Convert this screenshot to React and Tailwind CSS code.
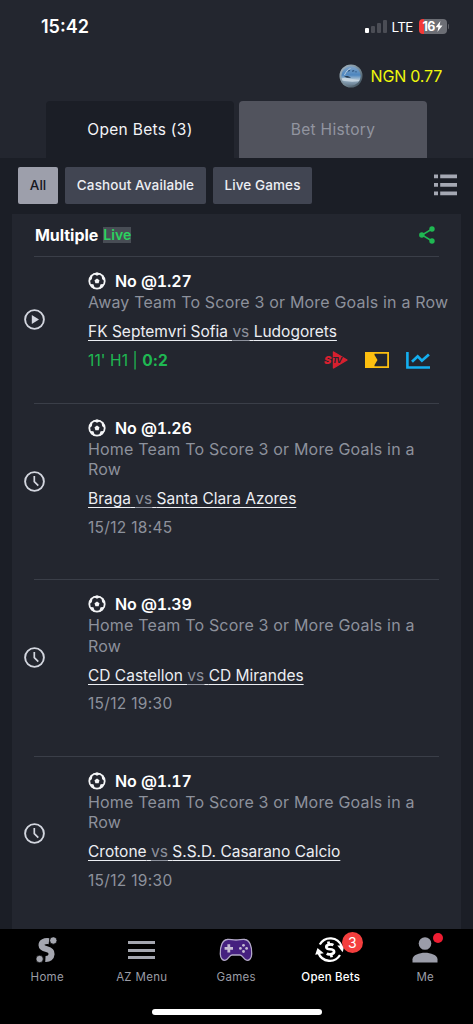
import React from 'react';

const bets = [
  {
    odds: 'No @1.27',
    market: 'Away Team To Score 3 or More Goals in a Row',
    home: 'FK Septemvri Sofia',
    away: 'Ludogorets',
    live: { clock: "11' H1", score: '0:2' },
  },
  {
    odds: 'No @1.26',
    market: 'Home Team To Score 3 or More Goals in a Row',
    home: 'Braga',
    away: 'Santa Clara Azores',
    date: '15/12 18:45',
  },
  {
    odds: 'No @1.39',
    market: 'Home Team To Score 3 or More Goals in a Row',
    home: 'CD Castellon',
    away: 'CD Mirandes',
    date: '15/12 19:30',
  },
  {
    odds: 'No @1.17',
    market: 'Home Team To Score 3 or More Goals in a Row',
    home: 'Crotone',
    away: 'S.S.D. Casarano Calcio',
    date: '15/12 19:30',
  },
];

function StatusBar() {
  return (
    <div className="flex h-[52px] items-center justify-between pl-[41px] pr-[24px] pt-px">
      <span className="text-[18px] font-semibold leading-5 text-white">15:42</span>
      <div className="flex items-center">
        <div className="flex items-end gap-[2px]">
          <span className="h-[5px] w-[4px] rounded-[1px] bg-white" />
          <span className="h-[7px] w-[4px] rounded-[1px] bg-[#4b4d55]" />
          <span className="h-[10px] w-[4px] rounded-[1px] bg-[#4b4d55]" />
          <span className="h-[13px] w-[4px] rounded-[1px] bg-[#4b4d55]" />
        </div>
        <span className="ml-[5px] w-[22px] whitespace-nowrap text-[13.5px] leading-4 tracking-[-0.7px] text-white">LTE</span>
        <div className="ml-[5px] flex h-[15px] w-[28px] items-center justify-center overflow-hidden rounded-[4px] bg-linear-to-r from-[#f43a38] from-[18%] to-[#6c6e75] to-[18%]">
          <span className="text-[12.5px] font-bold leading-4 tracking-[-0.7px] text-white">16</span>
          <svg className="h-[11px] w-[8px]" viewBox="0 0 8 11" fill="#fff">
            <path d="M5.4 0 0.6 6.2H3.4L2.4 11 7.5 4.5H4.6Z" />
          </svg>
        </div>
        <span className="ml-px h-[5px] w-[1.5px] rounded-r bg-[#5b5d64]" />
      </div>
    </div>
  );
}

function Avatar() {
  return (
    <svg className="h-[24px] w-[24px]" viewBox="0 0 24 24">
      <defs>
        <linearGradient id="rim" x1="0" y1="0" x2="1" y2="1">
          <stop offset="0" stopColor="#a9bac6" />
          <stop offset="0.55" stopColor="#758996" />
          <stop offset="1" stopColor="#33434f" />
        </linearGradient>
        <linearGradient id="sky" x1="0" y1="0" x2="0" y2="1">
          <stop offset="0" stopColor="#7fa3c8" />
          <stop offset="0.45" stopColor="#4d86bf" />
          <stop offset="0.65" stopColor="#9fb9cf" />
          <stop offset="1" stopColor="#64798c" />
        </linearGradient>
      </defs>
      <circle cx="12" cy="12" r="11.5" fill="url(#rim)" />
      <circle cx="12" cy="12" r="9.7" fill="url(#sky)" />
      <path d="M2.6 14.500c3-1 5.500-.8 8.500.2l9.500 1-1 1.600c-5 .6-12 .5-16.200-.7Z" fill="#c4d3df" />
      <path d="M5 12.500c2-.9 5-.6 7 1.100-2.500.6-5 .2-7-1.100Z" fill="#26394e" />
      <path d="M9 7.200 11 6.200M13 7.300l2.200-.7M16.500 7.600l1 .2" stroke="#2c517c" strokeWidth="1.200" fill="none" />
      <path d="M5.500 11C7 7.500 9 5.500 11.500 4.500" stroke="#b8cadb" strokeWidth="1" fill="none" />
    </svg>
  );
}

function ListIcon() {
  return (
    <svg className="h-[22px] w-[23px]" viewBox="0 0 23 22" fill="#a5a8b3">
      <path d="M0 .5h4v3.700H0zM6.200 .5H23v3.700H6.200zM0 9h4v3.700H0zM6.200 9H23v3.700H6.200zM0 17.500h4v3.700H0zM6.200 17.500H23v3.700H6.200z" />
    </svg>
  );
}

function ShareIcon() {
  return (
    <svg className="h-[18px] w-[16px]" viewBox="0 0 16 18" fill="#1fb852">
      <path d="M13 3 3 9l10 6" fill="none" stroke="#1fb852" strokeWidth="1.500" />
      <circle cx="13" cy="3" r="2.700" />
      <circle cx="2.800" cy="9" r="2.700" />
      <circle cx="13" cy="15" r="2.700" />
    </svg>
  );
}

function BallIcon() {
  return (
    <svg className="mt-px h-[18px] w-[18px]" viewBox="0 0 18 18">
      <circle cx="9" cy="9" r="7.700" fill="none" stroke="#f4f5f7" strokeWidth="1.800" />
      <g fill="#f4f5f7">
        <path d="M9 6.500l2.500 1.800-.9 2.900H7.400l-.9-2.900z" />
        <path d="M5 1.800 9 3.700l4-1.900L9 .4z" />
        <path d="M.8 9.200 3.800 7.300 4.500 3.600 2.500 3.600zM17.200 9.200l-3-1.900-.7-3.700 2 0z" />
        <path d="M1.700 12l3.700.3 1.700 4.400-3.200-.9zM16.300 12l-3.700.3-1.700 4.400 3.200-.9z" />
      </g>
    </svg>
  );
}

function PlayIcon() {
  return (
    <svg className="h-[21px] w-[21px]" viewBox="0 0 21 21">
      <circle cx="10.500" cy="10.500" r="9.400" fill="none" stroke="#d3d6df" strokeWidth="1.900" />
      <path d="M7.800 6v9l7.200-4.500z" fill="#d3d6df" />
    </svg>
  );
}

function ClockIcon() {
  return (
    <svg className="h-[21px] w-[21px]" viewBox="0 0 21 21" fill="none" stroke="#d3d6df">
      <circle cx="10.500" cy="10.500" r="9.400" strokeWidth="1.900" />
      <path d="M10.300 5v5.700l4 4" strokeWidth="1.700" />
    </svg>
  );
}

function LiveIcons() {
  return (
    <div className="flex items-center">
      <svg className="h-[18px] w-[24px]" viewBox="0 0 24 18">
        <path d="M9.500 1 23 9 9.500 17z" fill="#d8202f" stroke="#d8202f" strokeWidth="1.400" strokeLinejoin="round" />
        <text x="0" y="13" fontFamily="Inter, sans-serif" fontSize="11" fontWeight="900" fontStyle="italic" fill="#d8202f">S</text>
        <text x="8.300" y="12" fontFamily="Inter, sans-serif" fontSize="8" fontWeight="700" fontStyle="italic" fill="#23262f" textLength="10">TV</text>
      </svg>
      <svg className="ml-[17px] h-[16px] w-[24px]" viewBox="0 0 24 16">
        <path d="M.9.900h22.200v14.200H.9z" fill="none" stroke="#fdbf0f" strokeWidth="1.800" />
        <path d="M0 0h9.500v3l3 5-3 5v3H0z" fill="#fdbf0f" />
      </svg>
      <svg className="ml-[17px] h-[17px] w-[24px]" viewBox="0 0 24 17" fill="none" stroke="#14aff0">
        <path d="M1.400 0v15.500H24" strokeWidth="2.600" />
        <path d="m6 9.800 5.700-5.500 4.200 4.400 7-6.300" strokeWidth="2.700" />
      </svg>
    </div>
  );
}

function BetRow({ bet }) {
  return (
    <div className={`mx-[22px] flex border-t border-[#3a3e48] ${bet.live ? 'h-[147px]' : 'h-[176.3px]'}`}>
      <div className={`-ml-[10px] w-[64px] shrink-0 ${bet.live ? 'pt-[52px]' : 'pt-[66.5px]'}`}>
        {bet.live ? <PlayIcon /> : <ClockIcon />}
      </div>
      <div className="-mr-[10px] flex-1 pt-[14px]">
        <div className="flex h-[21px] items-start">
          <BallIcon />
          <span className="ml-[9px] text-[16px] font-semibold leading-[20px] tracking-[-0.1px] tabular-nums text-white">{bet.odds}</span>
        </div>
        <p className="text-[16px] leading-[20.2px] tracking-[0.18px] text-[#8d919c]">{bet.market}</p>
        <p className="mt-[10px] text-[15.5px] leading-[20px] text-[#8d919c] decoration-1 underline-offset-[3px]">
          <span className="text-[#eceef3] underline underline-offset-[3px]">{bet.home} </span>
          <span className="underline underline-offset-[3px]">vs</span>
          <span className="text-[#eceef3] underline underline-offset-[3px]"> {bet.away}</span>
        </p>
        {bet.live ? (
          <div className="mt-[8px] flex h-[20px] items-center justify-between pr-[19px] text-[15.5px] text-[#1fb852]">
            <span className="tracking-[0.1px]">{bet.live.clock} | <b className="font-bold">{bet.live.score}</b></span>
            <LiveIcons />
          </div>
        ) : (
          <p className="mt-[8.5px] text-[15.5px] leading-[20px] tracking-[0.3px] text-[#8d919c]">{bet.date}</p>
        )}
      </div>
    </div>
  );
}

function HomeIcon() {
  return (
    <svg className="h-[26px] w-[22px]" viewBox="0 0 22 26">
      <path d="M13 4.200C8.500 3.600 5.400 5.200 5.500 8.100c.1 2.600 2.600 3.400 5.200 4 2.600.6 5.100 1.700 4.900 5-.2 3.200-2.600 5-6.200 4.800" fill="none" stroke="#a5a7b0" strokeWidth="6" />
      <circle cx="17.300" cy="3.500" r="3.700" fill="#a5a7b0" stroke="#000" strokeWidth=".8" />
      <circle cx="3.600" cy="22" r="3.700" fill="#a5a7b0" stroke="#000" strokeWidth=".8" />
    </svg>
  );
}

function GamepadIcon() {
  return (
    <svg className="h-[24px] w-[34px]" viewBox="0 0 34 24">
      <path d="M8 1.500C11 1 13 2 17 2s6-1 9-.5c4.500.6 7 6.500 6.700 14.500-.1 4.500-2.500 6.800-5.200 6.200-3-.7-3.800-5.200-6.500-5.200h-8c-2.700 0-3.500 4.500-6.500 5.200C3.800 22.800 1.400 20.500 1.300 16 1 8 3.500 2.100 8 1.500z" fill="#45207f" stroke="#b3a9c8" strokeWidth="1.300" />
      <path d="M9.800 6.200v8.400M5.600 10.400H14" stroke="#c6bdd4" strokeWidth="2.800" />
      <g fill="#c6bdd4">
        <circle cx="24.500" cy="7.300" r="1.400" />
        <circle cx="24.500" cy="13.500" r="1.400" />
        <circle cx="21.400" cy="10.400" r="1.400" />
        <circle cx="27.600" cy="10.400" r="1.400" />
      </g>
    </svg>
  );
}

function OpenBetsIcon() {
  return (
    <svg className="h-[29px] w-[30px]" viewBox="0 0 30 29" fill="none" stroke="#fff">
      <path d="M4.800 9.500A12 12 0 0 1 26.500 11" strokeWidth="2.300" />
      <path d="M25 20A12 12 0 0 1 3.500 18" strokeWidth="2.300" />
      <path d="M22.300 10.500h7l-1.600 6.800z" fill="#fff" stroke="none" />
      <path d="M.2 19.800 2.500 13l6.300 5.300z" fill="#fff" stroke="none" />
      <g transform="rotate(-12 15 14.500)">
        <path d="M19.200 10.800c-1.600-1.600-7.300-2.100-7.300.9 0 3.100 6.700 2 6.700 5.300 0 3-5.700 2.700-7.700.9" strokeWidth="2.700" />
        <path d="M15 6.400v3M15 19v3.500" strokeWidth="2.700" />
      </g>
    </svg>
  );
}

function NavItem({ label, active, children }) {
  return (
    <div className="flex w-[94.5px] flex-col items-center">
      <div className="relative flex h-[32px] items-center justify-center">{children}</div>
      <span className={`mt-[3px] text-[11.5px] leading-4 ${active ? 'font-medium tracking-[0.2px] text-white' : 'tracking-[0.3px] text-[#9b9da6]'}`}>{label}</span>
    </div>
  );
}

function BottomNav() {
  return (
    <nav className="flex h-[95px] flex-col items-center bg-black pt-[5px]">
      <div className="flex w-full">
        <NavItem label="Home"><HomeIcon /></NavItem>
        <NavItem label="AZ Menu">
          <div className="flex w-[27px] flex-col gap-[4.500px]">
            <span className="h-[3px] bg-[#a5a7b0]" />
            <span className="h-[3px] bg-[#a5a7b0]" />
            <span className="h-[3px] bg-[#a5a7b0]" />
          </div>
        </NavItem>
        <NavItem label="Games"><GamepadIcon /></NavItem>
        <NavItem label="Open Bets" active>
          <div className="-ml-[2px] -mt-px"><OpenBetsIcon /></div>
          <span className="absolute left-[25px] -top-[2px] flex h-[21px] w-[21px] items-center justify-center rounded-full bg-[#f43f3e] text-[14px] text-white">3</span>
        </NavItem>
        <NavItem label="Me">
          <svg className="h-[26px] w-[26px]" viewBox="0 0 26 26" fill="#9b9da9">
            <circle cx="13" cy="6.500" r="6.300" />
            <path d="M.5 25.500v-3.200C.5 18 7.500 15.800 13 15.800S25.500 18 25.500 22.300v3.200z" />
          </svg>
          <span className="absolute -top-px left-[21px] h-[10px] w-[10px] rounded-full bg-[#ee1d32]" />
        </NavItem>
      </div>
      <span className="mt-[24px] h-[6px] w-[170px] rounded-full bg-white" />
    </nav>
  );
}

export default function App() {
  return (
    <div className="flex h-[1024px] w-[473px] flex-col overflow-hidden bg-[#1b1e26] font-['Inter',sans-serif]">
      <header className="h-[158px] bg-[#23262f]">
        <StatusBar />
        <div className="flex h-[49px] items-center justify-end pb-[2px] pr-[31px]">
          <Avatar />
          <span className="ml-[8px] text-[16px] tracking-[-0.2px] text-[#f0f80c]">NGN 0.77</span>
        </div>
        <div className="flex gap-[4px] pl-[46px]">
          <div className="flex h-[57px] w-[188px] items-center justify-center rounded-t-[4px] bg-[#1b1e26] text-[15.5px] tracking-[0.3px] text-[#f3f4f7]">Open Bets (3)</div>
          <div className="ml-px flex h-[57px] w-[188px] items-center justify-center rounded-t-[4px] bg-[#51535d] text-[15.5px] tracking-[0.3px] text-[#9295a0]">Bet History</div>
        </div>
      </header>

      <div className="flex h-[56px] items-center gap-[7px] pb-[2px] pl-[18px] pr-[16px] text-[13.5px] font-medium">
        <button className="h-[37px] w-[40px] rounded-[2px] bg-[#9d9fab] text-[#16181e]">All</button>
        <button className="h-[37px] w-[141px] rounded-[2px] bg-[#414552] tracking-[0.1px] text-[#eceef3]">Cashout Available</button>
        <button className="h-[37px] w-[99px] rounded-[2px] bg-[#414552] tracking-[0.1px] text-[#eceef3]">Live Games</button>
        <div className="ml-auto"><ListIcon /></div>
      </div>

      <main className="mx-[12px] flex-1 overflow-hidden bg-[#23262f]">
        <div className="flex h-[42px] items-center pl-[23px] pr-[26px]">
          <h2 className="text-[16px] font-bold tracking-[-0.05px] text-white">Multiple</h2>
          <span className="ml-[5px] bg-[#484d55] text-[14px] font-semibold leading-4 tracking-[0.1px] text-[#2bd35f]">Live</span>
          <div className="ml-auto"><ShareIcon /></div>
        </div>
        {bets.map((bet) => <BetRow key={bet.odds} bet={bet} />)}
      </main>

      <BottomNav />
    </div>
  );
}
